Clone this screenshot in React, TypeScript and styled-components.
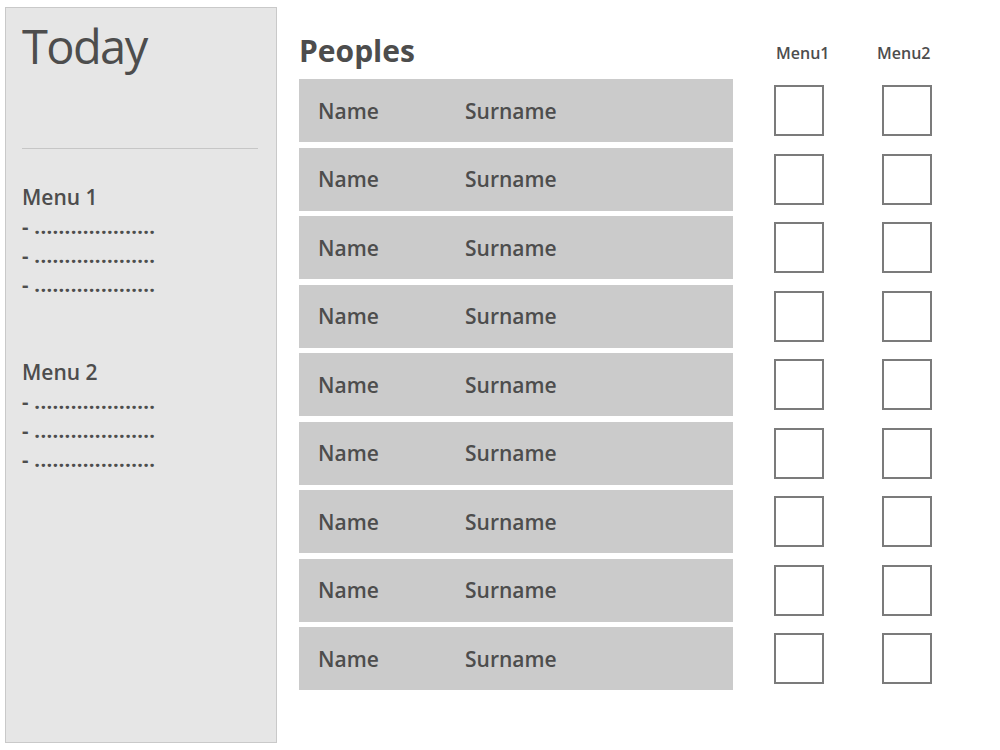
import React from 'react';
import styled, { createGlobalStyle } from 'styled-components';

const GlobalStyle = createGlobalStyle`
  html, body {
    margin: 0;
    padding: 0;
    background: #ffffff;
  }
  body {
    font-family: "Open Sans", "Noto Sans", Arial, sans-serif;
    color: #4d4d4d;
  }
  * {
    box-sizing: border-box;
  }
`;

const Page = styled.div`
  display: flex;
  align-items: flex-start;
  gap: 22px;
  padding-left: 5px;
  width: 1000px;
  height: 750px;
  overflow: hidden;
`;

const Sidebar = styled.aside`
  width: 272px;
  height: 736px;
  margin-top: 7px;
  flex-shrink: 0;
  background: #e6e6e6;
  border: 1px solid #c9c9c9;
  padding: 10px 18px 0 16px;
  display: flex;
  flex-direction: column;
`;

const Title = styled.h1`
  margin: 0;
  font-size: 47px;
  line-height: 56px;
  font-weight: 400;
  letter-spacing: -1.6px;
  color: #4d4d4d;
`;

const Divider = styled.hr`
  margin: 74px 0 0 0;
  border: 0;
  height: 1px;
  background: #c6c6c6;
`;

const MenuGroup = styled.div<{ $gap: number }>`
  margin-top: ${({ $gap }) => $gap}px;
  display: flex;
  flex-direction: column;
`;

const MenuTitle = styled.h2`
  margin: 0;
  font-size: 21px;
  line-height: 29px;
  font-weight: 600;
  color: #4d4d4d;
`;

const MenuItem = styled.div`
  font-size: 20px;
  line-height: 29px;
  font-weight: 700;
  letter-spacing: 0.35px;
  color: #4d4d4d;
  white-space: nowrap;
`;

const Main = styled.main`
  display: flex;
  flex-direction: column;
  padding-top: 33px;
`;

const Grid = styled.div`
  display: grid;
  grid-template-columns: 434px 41px 50px 58px 50px;
`;

const Header = styled(Grid)`
  height: 36px;
  align-items: end;
`;

const Heading = styled.h2`
  margin: 0;
  font-size: 30px;
  line-height: 36px;
  font-weight: 700;
  color: #4d4d4d;
  grid-column: 1;
`;

const ColumnLabel = styled.span<{ $col: number; $nudge: number }>`
  grid-column: ${({ $col }) => $col};
  font-size: 16px;
  line-height: 20px;
  font-weight: 600;
  color: #4d4d4d;
  margin-bottom: 6px;
  margin-left: ${({ $nudge }) => $nudge}px;
  white-space: nowrap;
`;

const Rows = styled(Grid)`
  margin-top: 10px;
  grid-auto-rows: 63px;
  row-gap: 5.5px;
  align-items: center;
`;

const PersonBar = styled.div`
  grid-column: 1;
  height: 63px;
  background: #cbcbcb;
  display: flex;
  align-items: center;
  padding-left: 19px;
  font-size: 21px;
  font-weight: 600;
  color: #4d4d4d;
`;

const NameCell = styled.span`
  width: 147px;
`;

const CheckBox = styled.div<{ $col: number }>`
  grid-column: ${({ $col }) => $col};
  width: 50px;
  height: 51px;
  border: 2px solid #7b7b7b;
  background: #ffffff;
`;

const dots = '- ' + '.'.repeat(20);

const menus = [
  { title: 'Menu 1', gap: 34 },
  { title: 'Menu 2', gap: 59 },
];

const people = Array.from({ length: 9 }, (_, i) => ({
  id: i,
  name: 'Name',
  surname: 'Surname',
}));

const App: React.FC = () => {
  return (
    <>
      <GlobalStyle />
      <Page>
        <Sidebar>
          <Title>Today</Title>
          <Divider />
          {menus.map(menu => (
            <MenuGroup key={menu.title} $gap={menu.gap}>
              <MenuTitle>{menu.title}</MenuTitle>
              <MenuItem>{dots}</MenuItem>
              <MenuItem>{dots}</MenuItem>
              <MenuItem>{dots}</MenuItem>
            </MenuGroup>
          ))}
        </Sidebar>
        <Main>
          <Header>
            <Heading>Peoples</Heading>
            <ColumnLabel $col={3} $nudge={2}>Menu1</ColumnLabel>
            <ColumnLabel $col={5} $nudge={-5}>Menu2</ColumnLabel>
          </Header>
          <Rows>
            {people.map(person => (
              <React.Fragment key={person.id}>
                <PersonBar>
                  <NameCell>{person.name}</NameCell>
                  <span>{person.surname}</span>
                </PersonBar>
                <CheckBox $col={3} />
                <CheckBox $col={5} />
              </React.Fragment>
            ))}
          </Rows>
        </Main>
      </Page>
    </>
  );
};

export default App;
